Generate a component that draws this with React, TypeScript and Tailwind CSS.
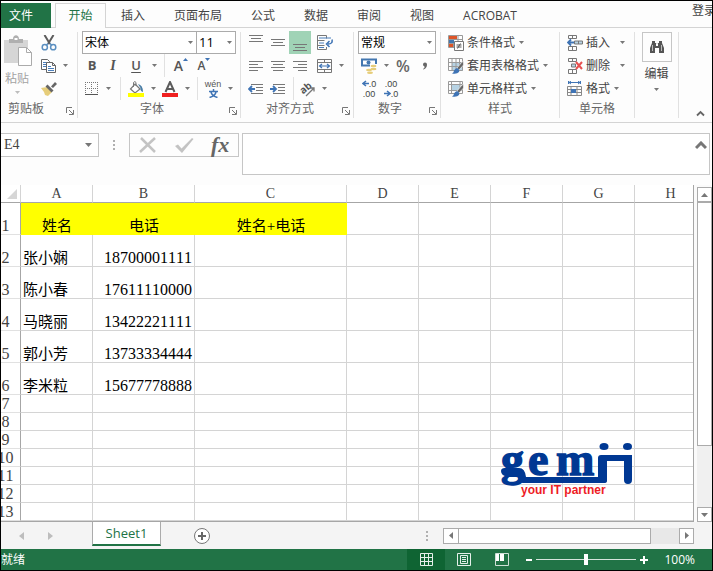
import type { ReactNode } from 'react'

const TABS = ['插入', '页面布局', '公式', '数据', '审阅', '视图', 'ACROBAT']
const COLUMNS = ['A', 'B', 'C', 'D', 'E', 'F', 'G', 'H']
const PEOPLE = [
    { name: '张小娴', phone: '18700001111' },
    { name: '陈小春', phone: '17611110000' },
    { name: '马晓丽', phone: '13422221111' },
    { name: '郭小芳', phone: '13733334444' },
    { name: '李米粒', phone: '15677778888' },
]
const EMPTY_ROWS = [7, 8, 9, 10, 11, 12, 13]

function Icon({ w = 16, h = 16, children }: { w?: number; h?: number; children: ReactNode }) {
    return (
        <svg width={w} height={h} viewBox={`0 0 ${w} ${h}`} fill="none" className="shrink-0" aria-hidden="true">
            {children}
        </svg>
    )
}

function Caret({ light = false }: { light?: boolean }) {
    return (
        <Icon w={5} h={3}>
            <path d="M0 0h5L2.5 3z" fill={light ? '#bdbdbd' : '#777'} />
        </Icon>
    )
}

function Tool({ label, className = 'w-[22px]', children }: { label: string; className?: string; children: ReactNode }) {
    return (
        <button aria-label={label} className={`flex h-full shrink-0 items-center justify-center ${className}`}>
            {children}
        </button>
    )
}

function Drop({ label }: { label: string }) {
    return (
        <Tool label={label} className="w-3">
            <Caret />
        </Tool>
    )
}

function Divider({ className = 'ml-1' }: { className?: string }) {
    return <div className={`mr-1 h-full w-px shrink-0 bg-[#e1e1e1] ${className}`} />
}

function Row({ className = 'pl-1', children }: { className?: string; children: ReactNode }) {
    return <div className={`flex h-[23px] items-center ${className}`}>{children}</div>
}

function Launcher({ label }: { label: string }) {
    return (
        <button aria-label={label} className="flex w-3.5 shrink-0 justify-center pt-1">
            <Icon w={8} h={8}>
                <path d="M.5 6V.5H6M3 3l4 4M7.500 3v4.500H3" stroke="#777" />
            </Icon>
        </button>
    )
}

function Group({ label, launcher, className, labelClass = 'text-center', children }: {
    label: string
    launcher?: boolean
    className: string
    labelClass?: string
    children: ReactNode
}) {
    return (
        <section aria-label={label} className={`my-1 flex shrink-0 flex-col border-r border-[#e1e1e1] ${className}`}>
            <div className="-mt-px h-[69px]">{children}</div>
            <div className="flex h-[22px] items-center">
                <span className={`flex-1 text-[#666] ${labelClass}`}>{label}</span>
                {launcher && <Launcher label={`${label}设置`} />}
            </div>
        </section>
    )
}

function Combo({ label, value, className }: { label: string; value: string; className: string }) {
    return (
        <label className={`relative block h-[23px] ${className}`}>
            <select aria-label={label} className="block h-full w-full appearance-none border border-[#ababab] bg-white pl-0.5 text-black">
                <option>{value}</option>
            </select>
            <span className="pointer-events-none absolute inset-y-0 right-1 flex items-center">
                <Caret />
            </span>
        </label>
    )
}

/* paragraph glyphs, each line is [x, y, width] */
function Lines({ rows }: { rows: number[][] }) {
    return (
        <Icon>
            {rows.map(([x, y, width]) => (
                <rect key={y} x={x} y={y} width={width} height="1" fill="#777" />
            ))}
        </Icon>
    )
}

function Clipboard() {
    return (
        <Group label="剪贴板" launcher className="w-[77px]" labelClass="pl-[7px]">
            <div className="flex">
                <button className="flex w-8 flex-col items-center gap-1 pt-1 text-[#a3a3a3]">
                    <Icon w={30} h={32}>
                        <path d="M2 5h24v23H2z" fill="#d6d6d6" />
                        <path d="M7 8V4h4c0-5 6-5 6 0h4v4z" fill="#b0b0b0" />
                        <path d="M12.500 3h3v2h-3z" fill="#fff" />
                        <path d="M16.500 12.500h8l5 5v13h-13z" fill="#fff" stroke="#ababab" />
                        <path d="M24.500 12.500v5h5" stroke="#ababab" />
                    </Icon>
                    <span className="leading-4">粘贴</span>
                    <Caret light />
                </button>
                <div className="ml-1">
                    <Row>
                        <Tool label="剪切" className="w-4">
                            <Icon>
                                <path d="M3.500 0L9 9M12.500 0L7 9" stroke="#5c5c5c" strokeWidth="2" />
                                <path d="M7 8.500l-2 2M9 8.500l2 2" stroke="#5b8fc0" strokeWidth="1.500" />
                                <circle cx="3.800" cy="12.200" r="2.600" stroke="#5b8fc0" strokeWidth="1.500" />
                                <circle cx="12.200" cy="12.200" r="2.600" stroke="#5b8fc0" strokeWidth="1.500" />
                            </Icon>
                        </Tool>
                    </Row>
                    <Row>
                        <Tool label="复制" className="w-4">
                            <Icon>
                                <path d="M.5 1.500h6l2 2v8h-8z" fill="#fff" stroke="#666" />
                                <path d="M2 4.500h4M2 6.500h4M2 8.500h3" stroke="#4a7ebb" />
                                <path d="M5.500 4.500h6l3 3v7h-9z" fill="#fff" stroke="#666" />
                                <path d="M11.500 4.500v3h3" stroke="#666" />
                                <path d="M7 8.500h3M7 10.500h6M7 12.500h6" stroke="#4a7ebb" />
                            </Icon>
                        </Tool>
                        <Tool label="复制选项" className="ml-0.5 w-3">
                            <Caret />
                        </Tool>
                    </Row>
                    <Row>
                        <Tool label="格式刷" className="w-4">
                            <Icon>
                                <path d="M0 7l6-1 5 5-4 4-3-1-1-3z" fill="#e6cd7a" />
                                <path d="M6.500 3.500l6 6-2 2-6-6z" fill="#666" />
                                <path d="M10 5.500L14 1l2 2-4 4z" fill="#666" />
                            </Icon>
                        </Tool>
                    </Row>
                </div>
            </div>
        </Group>
    )
}

function FontGroup() {
    return (
        <Group label="字体" launcher className="w-[163px]">
            <Row>
                <Combo label="字体名称" value="宋体" className="w-[115px]" />
                <Combo label="字号" value="11" className="-ml-px w-10 text-[13px]" />
            </Row>
            <Row className="pl-1 text-[13px] text-[#555]">
                <Tool label="加粗" className="w-5"><b>B</b></Tool>
                <Tool label="倾斜"><i className="font-['Liberation_Serif',serif] text-sm font-bold">I</i></Tool>
                <Tool label="下划线" className="w-6"><span className="font-semibold underline underline-offset-2">U</span></Tool>
                <Drop label="下划线选项" />
                <Divider />
                <Tool label="增大字号" className="w-6">
                    <span className="text-sm font-semibold">A</span>
                    <span className="-mt-3"><Icon w={5} h={3}><path d="M0 3h5L2.500 0z" fill="#3f74b5" /></Icon></span>
                </Tool>
                <Tool label="减小字号">
                    <span className="text-xs font-semibold">A</span>
                    <span className="-mt-3"><Icon w={5} h={3}><path d="M0 0h5L2.500 3z" fill="#3f74b5" /></Icon></span>
                </Tool>
            </Row>
            <Row>
                <Tool label="边框" className="w-5">
                    <Icon w={14} h={14}>
                        <path d="M.5 0v13M6.500 0v13M12.500 0v13M0 .5h13M0 6.500h13" stroke="#777" strokeDasharray="1 1" />
                        <path d="M0 12.500h13" stroke="#555" />
                    </Icon>
                </Tool>
                <Drop label="边框选项" />
                <Divider className="ml-1.5" />
                <Tool label="填充颜色">
                    <Icon>
                        <path d="M7 3l5 5-5 4-4.500-4z" fill="#fff" stroke="#777" strokeWidth="1.200" />
                        <path d="M5.500 6V1.500q1.500-2 2.500 0V5" stroke="#777" />
                        <path d="M10 3q5 1 5 8-3-1-2.500-4z" fill="#4a7ea6" />
                        <path d="M0 12h16v4H0z" fill="#ffff00" />
                    </Icon>
                </Tool>
                <Drop label="填充颜色选项" />
                <Tool label="字体颜色">
                    <Icon>
                        <path d="M3.500 11L8 1l4.500 10M5 8h6" stroke="#5c5c5c" strokeWidth="2" />
                        <path d="M0 12h16v4H0z" fill="#f02020" />
                    </Icon>
                </Tool>
                <Drop label="字体颜色选项" />
                <Divider />
                <Tool label="拼音" className="w-[22px] flex-col font-['Liberation_Sans','Noto_Sans_CJK_SC',sans-serif]">
                    <span className="text-[9px] leading-[10px] text-[#555]">wén</span>
                    <Icon w={9} h={9}>
                        <path d="M4.500 0v2M0 2.500h9M2 3q1 4 6.500 5.500M7 3Q6 7 .5 8.500" stroke="#3f74b5" strokeWidth="1.500" />
                    </Icon>
                </Tool>
                <Drop label="拼音选项" />
            </Row>
        </Group>
    )
}

function AlignGroup() {
    return (
        <Group label="对齐方式" launcher className="w-[113px]">
            <Row>
                <Tool label="顶端对齐"><Lines rows={[[1, 0, 14], [3, 3, 10], [1, 6, 14]]} /></Tool>
                <Tool label="垂直居中"><Lines rows={[[1, 4, 14], [3, 7, 10], [1, 10, 14]]} /></Tool>
                <Tool label="底端对齐" className="w-[22px] bg-[#a0d3b6]"><Lines rows={[[1, 9, 14], [3, 12, 10], [1, 15, 14]]} /></Tool>
                <Tool label="自动换行" className="ml-1 w-5">
                    <Icon>
                        <path d="M9.500 3.500V.5h-9v14h9V12M.5 5.500h7M.5 10.500h7" stroke="#777" />
                        <path d="M2 3h12M2 8h5M2 12.500h5" stroke="#4a7ebb" />
                        <path d="M15 4.500q1 4.500-4 4.500M12.500 6L9.500 9l3 3" stroke="#3f74b5" strokeWidth="1.500" />
                    </Icon>
                </Tool>
            </Row>
            <Row>
                <Tool label="左对齐"><Lines rows={[[1, 3, 14], [1, 6, 9], [1, 9, 14], [1, 12, 9]]} /></Tool>
                <Tool label="居中"><Lines rows={[[1, 3, 14], [3, 6, 10], [1, 9, 14], [3, 12, 10]]} /></Tool>
                <Tool label="右对齐"><Lines rows={[[1, 3, 14], [6, 6, 9], [1, 9, 14], [6, 12, 9]]} /></Tool>
                <Tool label="合并后居中" className="ml-1 w-5">
                    <Icon>
                        <path d="M.5 1.500h14v13H.5zM.5 4.500h14M.5 11.500h14M7.500 1.500v3M7.500 11.500v3" stroke="#777" />
                        <path d="M3 8h9M5 6L2.500 8 5 10M10 6l2.500 2L10 10" stroke="#3f74b5" strokeWidth="1.200" />
                    </Icon>
                </Tool>
                <Drop label="合并选项" />
            </Row>
            <Row>
                <Tool label="减少缩进">
                    <Icon>
                        <path d="M3 3.500h12M8 6.500h7M8 9.500h7M3 12.500h12" stroke="#777" />
                        <path d="M7 8H1M4 5L1 8l3 3" stroke="#3f74b5" strokeWidth="1.800" />
                    </Icon>
                </Tool>
                <Tool label="增加缩进">
                    <Icon>
                        <path d="M3 3.500h12M8 6.500h7M8 9.500h7M3 12.500h12" stroke="#777" />
                        <path d="M0 8h6M3 5l3 3-3 3" stroke="#3f74b5" strokeWidth="1.800" />
                    </Icon>
                </Tool>
                <Divider />
                <Tool label="方向" className="w-5">
                    <Icon>
                        <text x="0" y="11" fontSize="10" fontWeight="700" fill="#555" transform="rotate(-40 5 8)">ab</text>
                        <path d="M6 15l8-8M10.500 7H14v3.500" stroke="#777" strokeWidth="1.300" />
                    </Icon>
                </Tool>
                <Drop label="方向选项" />
            </Row>
        </Group>
    )
}

function NumberGroup() {
    return (
        <Group label="数字" launcher className="w-[87px]">
            <Row>
                <Combo label="数字格式" value="常规" className="w-[78px]" />
            </Row>
            <Row className="pl-1 text-base font-semibold text-[#666]">
                <Tool label="会计数字格式">
                    <Icon>
                        <path d="M1 1.500h14v6H1z" fill="#fff" stroke="#4377b0" strokeWidth="2" />
                        <circle cx="7.500" cy="4.500" r="2" fill="#4377b0" />
                        <path d="M9 6h7v5h-2v5H5v-5h4z" fill="#fff" />
                        <ellipse cx="12.500" cy="8" rx="3" ry="1.300" fill="#e6cd7a" />
                        <ellipse cx="12.500" cy="11" rx="3" ry="1.300" fill="#e6cd7a" />
                        <ellipse cx="8" cy="12" rx="3" ry="1.200" fill="#e6cd7a" />
                        <ellipse cx="9" cy="14.700" rx="3" ry="1.200" fill="#e6cd7a" />
                    </Icon>
                </Tool>
                <Drop label="货币选项" />
                <Tool label="百分比样式">%</Tool>
                <Tool label="千位分隔样式">
                    <Icon w={6} h={8}><path d="M1 2.500a2 2 0 1 1 4 0Q5 6 1.500 7.500L1 7q2-1 1.500-2.500A2 2 0 0 1 1 2.500z" fill="#666" /></Icon>
                </Tool>
            </Row>
            <Row className="pl-1 font-['Liberation_Sans',sans-serif] text-[9px] leading-[10px] text-[#444]">
                <Tool label="增加小数位数" className="w-[22px] flex-col">
                    <span className="flex items-center"><Icon w={7} h={7}><path d="M7 3.500H1M4 1L1 3.500 4 6" stroke="#3f74b5" strokeWidth="1.500" /></Icon>.0</span>
                    <span>.00</span>
                </Tool>
                <Tool label="减少小数位数" className="w-[22px] flex-col">
                    <span>.00</span>
                    <span className="flex items-center"><Icon w={7} h={7}><path d="M0 3.500h6M3 1l3 2.500L3 6" stroke="#3f74b5" strokeWidth="1.500" /></Icon>.0</span>
                </Tool>
            </Row>
        </Group>
    )
}

function TableBrush({ cellOnly = false }: { cellOnly?: boolean }) {
    return (
        <Icon>
            {cellOnly ? <path d="M4 4h8v6H4z" fill="#b7d3e4" /> : <path d="M4 5h11v8H4z" fill="#b7d3e4" />}
            <path d={cellOnly ? 'M.5 .5h14v12H.5zM3.500 .5v12M.5 3.500h14M.5 9.500h14M12 .5v9' : 'M.5 .5h14v12H.5zM4 .5v12M8 .5v12M11.500 .5v12M.5 4.500h14M.5 8.500h14'} stroke="#9a9a9a" />
            <path d="M15.500 3.500v3.500l-4.500 5-2-2 5-6z" fill="#666" stroke="#fff" strokeWidth=".6" />
            <path d="M9 10q3 1 2 4-2 2.500-7 1.500 2-1 2-3 1-2 3-2.500z" fill="#3f74b5" />
        </Icon>
    )
}

function TextTool({ icon, label, wide = false }: { icon: ReactNode; label: string; wide?: boolean }) {
    return (
        <button className="flex h-full items-center gap-[3px]">
            {icon}
            <span>{label}</span>
            <span className={wide ? 'ml-[7px]' : 'ml-px'}><Caret /></span>
        </button>
    )
}

function StyleGroup() {
    const condition = (
        <Icon>
            <path d="M.5 .5h14v12H.5zM5.500 .5v12M10 .5v12M.5 4.500h14M.5 8.500h14" stroke="#999" />
            <path d="M1 1h8v3H1zM1 9h4v3H1z" fill="#dd5427" />
            <path d="M1 5h5v3H1z" fill="#4377b0" />
            <path d="M6.500 6.500h9v9h-9z" fill="#fff" stroke="#777" />
            <path d="M8.500 10h5M8.500 12h5M12.500 8.500l-3 5" stroke="#555" />
        </Icon>
    )
    return (
        <Group label="样式" className="w-[119px]">
            <Row className="pl-[7px]"><TextTool icon={condition} label="条件格式" /></Row>
            <Row className="pl-[7px]"><TextTool icon={<TableBrush />} label="套用表格格式" /></Row>
            <Row className="pl-[7px]"><TextTool icon={<TableBrush cellOnly />} label="单元格样式" /></Row>
        </Group>
    )
}

function CellsGroup() {
    const insert = (
        <Icon>
            <path d="M1.500 .5h8v3h-8zM5.500 .5v3M1.500 11.500h8v4h-8zM5.500 11.500v4" stroke="#777" />
            <path d="M7.500 6h8v3h-8zM11.500 6v3" fill="#b7d3e4" stroke="#777" />
            <path d="M7 7.500H1M4 4.500l-3 3 3 3" stroke="#3f74b5" strokeWidth="1.800" />
        </Icon>
    )
    const remove = (
        <Icon>
            <path d="M1.500 .5h8v3h-8zM5.500 .5v3M1.500 11.500h8v4h-8zM5.500 11.500v4" stroke="#777" />
            <path d="M4.500 6h4v3h-4z" fill="#b7d3e4" stroke="#777" />
            <path d="M9 4l6 7M15 4l-6 7" stroke="#e85050" strokeWidth="2" />
        </Icon>
    )
    const format = (
        <Icon>
            <path d="M1.500 0v3M13.500 0v3M2 1.500h11M4 0L2 1.500 4 3M11 0l2 1.500L11 3" stroke="#3f74b5" />
            <path d="M.5 5.500h14v9H.5zM4 5.500v9M10 5.500v9M.5 8.500h14M.5 11.500h14" stroke="#888" />
            <path d="M4 8h5v4H4z" fill="#3f74b5" />
        </Icon>
    )
    return (
        <Group label="单元格" className="w-[75px]">
            <Row className="pl-[7px]"><TextTool icon={insert} label="插入" wide /></Row>
            <Row className="pl-[7px]"><TextTool icon={remove} label="删除" wide /></Row>
            <Row className="pl-[7px]"><TextTool icon={format} label="格式" /></Row>
        </Group>
    )
}

function Ribbon() {
    return (
        <div className="flex h-[95px] border-b border-[#d4d4d4]">
            <Clipboard />
            <FontGroup />
            <AlignGroup />
            <NumberGroup />
            <StyleGroup />
            <CellsGroup />
            <div className="my-1 flex w-11 shrink-0 justify-center border-r border-[#e1e1e1]">
                <button className="flex flex-col items-center">
                    <span className="flex h-[30px] w-[30px] items-center justify-center border border-[#c6c6c6]">
                        <Icon>
                            <path d="M3 2h3v2h1v3h2V4h1V2h3v2l2 5v5h-5V9H6v5H1V9l2-5z" fill="#555" />
                            <path d="M3.500 6v6M12.500 6v6M7.500 4.500h1" stroke="#bbb" />
                        </Icon>
                    </span>
                    <span className="mt-1 leading-4">编辑</span>
                    <span className="mt-1.5"><Caret /></span>
                </button>
            </div>
            <button aria-label="折叠功能区" className="mt-auto mr-[7px] mb-1 ml-auto">
                <Icon w={9} h={9}><path d="M1 6.500L4.500 3 8 6.500" stroke="#666" strokeWidth="1.800" /></Icon>
            </button>
        </div>
    )
}

function FormulaBar() {
    return (
        <div className="flex h-[62px] items-start py-2.5">
            <label className="relative block h-6 w-[98px] shrink-0">
                <input
                    aria-label="名称框"
                    defaultValue="E4"
                    className="h-full w-full border border-l-0 border-[#c6c6c6] bg-white pl-[3px] font-['Liberation_Serif',serif] text-sm text-[#444]"
                />
                <span className="pointer-events-none absolute inset-y-0 right-[7px] flex items-center">
                    <Icon w={7} h={4}><path d="M0 0h7L3.500 4z" fill="#777" /></Icon>
                </span>
            </label>
            <div className="flex h-6 w-[30px] shrink-0 items-center justify-center">
                <Dots />
            </div>
            <div className="flex h-6 w-[110px] shrink-0 items-center justify-around border border-[#c6c6c6]">
                <button aria-label="取消">
                    <Icon w={18} h={16}><path d="M2 1l14 14M16 1L1 15" stroke="#c3c3c3" strokeWidth="2.500" /></Icon>
                </button>
                <button aria-label="输入">
                    <Icon w={20} h={16}><path d="M1 9l3-1.500 3.500 4L18 1l1.500 1L8 16z" fill="#c3c3c3" /></Icon>
                </button>
                <button aria-label="插入函数" className="font-['Liberation_Serif',serif] text-[22px] leading-5 font-bold text-[#666] italic">
                    fx
                </button>
            </div>
            <div className="relative mr-0.5 ml-[3px] h-[42px] flex-1">
                <input aria-label="编辑栏" className="h-full w-full border border-[#c6c6c6] bg-white px-1" />
                <button aria-label="折叠编辑栏" className="absolute top-2 right-[3px]">
                    <Icon w={12} h={9}><path d="M1 7l5-5 5 5" stroke="#777" strokeWidth="3" /></Icon>
                </button>
            </div>
        </div>
    )
}

function Dots() {
    return (
        <Icon w={2} h={10}>
            <path d="M0 0h2v2H0zM0 4h2v2H0zM0 8h2v2H0z" fill="#b0b0b0" />
        </Icon>
    )
}

function RowHead({ n }: { n: number }) {
    return (
        <th scope="row" className="border-r border-b border-r-[#a6a6a6] border-b-[#e1e1e1] p-0 text-center align-bottom font-normal text-[#444]">
            {n}
        </th>
    )
}

const CELL = 'border-r border-b border-[#d4d4d4] p-0 align-bottom'

function Blanks({ count }: { count: number }) {
    return <>{Array.from({ length: count }, (_, i) => <td key={i} className={CELL} />)}</>
}

function Logo() {
    return (
        <svg width="136" height="58" viewBox="0 0 136 58" fill="#003893" aria-label="gemii" className="absolute right-[57px] bottom-[21px]">
            <g fontFamily="'Liberation Serif', serif" fontWeight="700" fontSize="46" stroke="#003893" strokeWidth="1.400">
                <text x="1" y="33">g</text>
                <text x="28" y="33">e</text>
                <text x="56" y="33">m</text>
            </g>
            <path d="M1 29q0-3 4-3h14q6 0 7 9h72V16q0-3 3-3h31v25q0 4-4 4t-4-4V19h-17v20q0 2-3 2H23q-3 0-4-4-2-4-6-3-12 2-12-5z" />
            <ellipse cx="104" cy="4.500" rx="4.500" ry="3.500" />
            <ellipse cx="127.500" cy="4.500" rx="4.500" ry="3.500" />
            <text x="21" y="52" fontFamily="'Liberation Sans', sans-serif" fontWeight="700" fontSize="12" fill="#ee1c25">your IT partner</text>
        </svg>
    )
}

function Sheet() {
    return (
        <div className="flex bg-[#fafafa]">
            <div className="relative min-w-0 flex-1 overflow-hidden border-r border-b border-[#a6a6a6] bg-white">
                <table className="-ml-2.5 w-[716px] min-w-full table-fixed border-separate border-spacing-0 font-['Liberation_Serif','Noto_Sans_CJK_SC',serif] text-[16px] leading-4 text-black [font-kerning:none]">
                    <colgroup>
                        <col className="w-[30px]" />
                        <col className="w-[72px]" />
                        <col className="w-[102px]" />
                        <col className="w-[152px]" />
                        <col className="w-[72px]" span={5} />
                    </colgroup>
                    <thead>
                        <tr className="h-[18px] text-sm leading-4 text-[#444]">
                            <th className="border-r border-b border-r-[#d4d4d4] border-b-[#a6a6a6] p-0 pr-[3px]">
                                <span className="flex justify-end">
                                    <Icon w={10} h={10}><path d="M10 0v10H0z" fill="#d6d6d6" /></Icon>
                                </span>
                            </th>
                            {COLUMNS.map((c) => (
                                <th key={c} scope="col" className="border-r border-b border-r-[#d4d4d4] border-b-[#a6a6a6] p-0 font-normal">
                                    {c}
                                </th>
                            ))}
                        </tr>
                    </thead>
                    <tbody>
                        <tr className="h-8">
                            <RowHead n={1} />
                            {['姓名', '电话', '姓名+电话'].map((t) => (
                                <td key={t} className="bg-[#ffff00] p-0 pb-px text-center align-bottom text-[15px]">{t}</td>
                            ))}
                            <Blanks count={5} />
                        </tr>
                        {PEOPLE.map((p, i) => (
                            <tr key={p.phone} className="h-8">
                                <RowHead n={i + 2} />
                                <td className={`${CELL} pl-0.5 text-[15px]`}>{p.name}</td>
                                <td className={`${CELL} pr-0.5 text-right`}>{p.phone}</td>
                                <Blanks count={6} />
                            </tr>
                        ))}
                        {EMPTY_ROWS.map((n) => (
                            <tr key={n} className="h-[18px]">
                                <RowHead n={n} />
                                <Blanks count={8} />
                            </tr>
                        ))}
                    </tbody>
                </table>
                <Logo />
            </div>
            <div className="mt-0.5 ml-[3px] flex w-[15px] shrink-0 flex-col">
                <button aria-label="向上滚动" className="flex h-[15px] items-center justify-center border border-[#ababab] bg-white">
                    <Icon w={7} h={4}><path d="M0 4h7L3.500 0z" fill="#777" /></Icon>
                </button>
                <div className="flex-1 bg-[#f0f0f0]">
                    <div className="h-4/5 border border-[#ababab] bg-white" />
                </div>
                <button aria-label="向下滚动" className="flex h-[15px] items-center justify-center border border-[#ababab] bg-white">
                    <Icon w={7} h={4}><path d="M0 0h7L3.500 4z" fill="#777" /></Icon>
                </button>
            </div>
        </div>
    )
}

function SheetBar() {
    return (
        <div className="flex h-[27px] bg-[#f4f4f4]">
            <div className="flex w-[91px] items-center gap-6 pl-[18px]">
                <button aria-label="上一个工作表"><Icon w={5} h={8}><path d="M5 0v8L0 4z" fill="#bdbdbd" /></Icon></button>
                <button aria-label="下一个工作表"><Icon w={5} h={8}><path d="M0 0v8l5-4z" fill="#bdbdbd" /></Icon></button>
            </div>
            <button className="h-6 w-[69px] border-x border-b-2 border-x-[#ababab] border-b-[#217346] bg-white text-[13px] leading-5 text-[#217346]">
                Sheet1
            </button>
            <button aria-label="新工作表" className="ml-8 flex items-center">
                <Icon w={18} h={18}>
                    <circle cx="9" cy="9" r="7.500" fill="#fff" stroke="#777" />
                    <path d="M9 5v8M5 9h8" stroke="#666" strokeWidth="2" />
                </Icon>
            </button>
            <div className="mr-[18px] ml-auto flex w-[268px] items-center">
                <Dots />
                <div className="ml-[15px] flex h-4 flex-1 bg-[#e8e8e8]">
                    <button aria-label="向左滚动" className="flex w-4 items-center justify-center border border-[#ababab] bg-white">
                        <Icon w={4} h={7}><path d="M4 0v7L0 3.500z" fill="#777" /></Icon>
                    </button>
                    <div className="-ml-px w-[193px] border border-[#ababab] bg-white" />
                    <button aria-label="向右滚动" className="ml-auto flex w-[15px] items-center justify-center border border-[#ababab] bg-white">
                        <Icon w={4} h={7}><path d="M0 0v7l4-3.500z" fill="#777" /></Icon>
                    </button>
                </div>
            </div>
        </div>
    )
}

function StatusBar() {
    return (
        <div className="flex h-[21px] items-center bg-[#217346] text-white">
            <span>就绪</span>
            <button aria-label="普通" className="ml-auto flex h-full w-[38px] items-center justify-center bg-[#0f6433]">
                <Icon w={13} h={13}>
                    <path d="M.5 .5h12v12H.5zM4.500 .5v12M8.500 .5v12M.5 4.500h12M.5 8.500h12" stroke="#e6f0ea" />
                </Icon>
            </button>
            <button aria-label="页面布局" className="flex h-full w-[38px] items-center justify-center">
                <Icon w={14} h={13}>
                    <path d="M.5 .5h13v12H.5zM3.500 2.500h7v8h-7zM5 4.500h4M5 6.500h4M5 8.500h4" stroke="#e6f0ea" />
                </Icon>
            </button>
            <button aria-label="分页预览" className="flex h-full w-[38px] items-center justify-center">
                <Icon w={14} h={13}>
                    <path d="M.5 .5h13v12H.5z" stroke="#cfe0d6" />
                    <path d="M1 1h3v7H1zM5 1h4v7H5z" fill="#fff" />
                </Icon>
            </button>
            <button aria-label="缩小" className="flex w-[15px] items-center justify-center">
                <Icon w={6} h={2}><path d="M0 0h6v2H0z" fill="#fff" /></Icon>
            </button>
            <input
                type="range"
                aria-label="显示比例"
                min={0}
                max={200}
                defaultValue={100}
                className="h-3 w-[100px] appearance-none bg-[linear-gradient(#d5e4db,#d5e4db)] bg-[length:100%_1px] bg-center bg-no-repeat [&::-webkit-slider-thumb]:h-[11px] [&::-webkit-slider-thumb]:w-1 [&::-webkit-slider-thumb]:appearance-none [&::-webkit-slider-thumb]:bg-white"
            />
            <button aria-label="放大" className="flex w-[15px] items-center justify-center">
                <Icon w={8} h={8}><path d="M3 0h2v3h3v2H5v3H3V5H0V3h3z" fill="#fff" /></Icon>
            </button>
            <span className="mr-[17px] ml-[13px]">100%</span>
        </div>
    )
}

export default function App() {
    return (
        <div className="overflow-hidden border border-black bg-[#fdfdfd] font-['Open_Sans','Noto_Sans_CJK_SC',sans-serif] text-xs text-[#444]">
            <nav className="flex h-[27px] pt-0.5 whitespace-nowrap shadow-[inset_0_-1px_0_#d4d4d4]">
                <button className="w-[50px] bg-[#217346] pl-2 text-left text-white">文件</button>
                <button className="ml-1 w-[51px] border border-b-0 border-[#d4d4d4] bg-[#fdfdfd] text-[#217346]">开始</button>
                <div className="ml-[15px] flex gap-[29px]">
                    {TABS.map((t) => (
                        <button key={t}>{t}</button>
                    ))}
                </div>
                <a href="#login" className="-mr-1 ml-auto">登录</a>
            </nav>
            <Ribbon />
            <FormulaBar />
            <Sheet />
            <SheetBar />
            <StatusBar />
        </div>
    )
}
